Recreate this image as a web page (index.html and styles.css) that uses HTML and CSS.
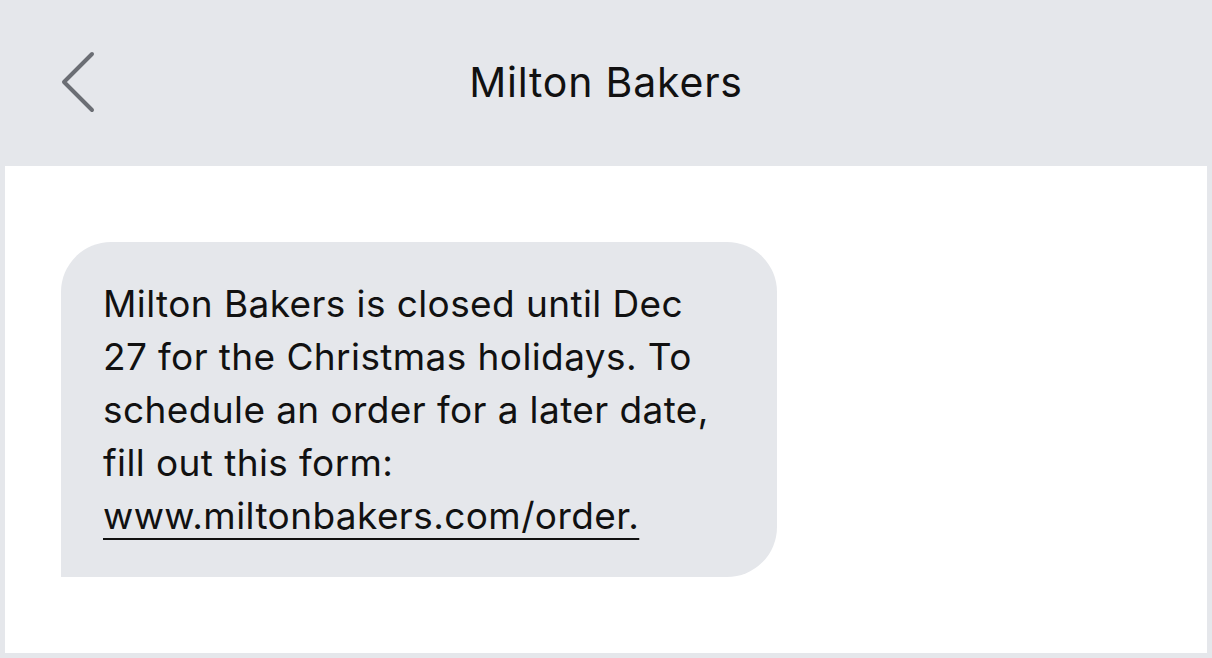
FILE: index.html
```html
<!DOCTYPE html>
<html>
<head>
  <title>Milton Bakers</title>
  <meta charset="utf-8">
  <link rel="stylesheet" href="styles.css">
</head>
<body>
  <div class="header">
    <div class="back">
      <svg width="40" height="64" viewBox="0 0 40 64">
        <polyline points="32,4 4,32 32,60" fill="none" stroke="#6b6e74" stroke-width="4" stroke-linecap="round" stroke-linejoin="round"/>
      </svg>
    </div>
    <div class="title">Milton Bakers</div>
    <div></div>
  </div>
  <div class="thread">
    <div class="bubble">
      Milton Bakers is closed until Dec<br>
      27 for the Christmas holidays. To<br>
      schedule an order for a later date,<br>
      fill out this form:<br>
      <a href="#" class="link">www.miltonbakers.com/order.</a>
    </div>
  </div>
</body>
</html>
```

FILE: styles.css
```css
body {
  margin: 0;
  background-color: #e5e7eb;
  font-family: Inter, Roboto, "Liberation Sans", sans-serif;
  color: #111;
}

.header {
  height: 166px;
  display: grid;
  grid-template-columns: 1fr auto 1fr;
  align-items: center;
}

.back {
  padding-left: 60px;
  padding-bottom: 2px;
  display: flex;
}

.title {
  font-size: 41px;
  padding-bottom: 2px;
  letter-spacing: 0.8px;
}

.thread {
  margin: 0 5px 5px;
  height: 487px;
  box-sizing: border-box;
  background-color: #fff;
  padding: 76px 0 0 56px;
}

.bubble {
  width: 716px;
  height: 335px;
  box-sizing: border-box;
  padding: 35px 0 0 42px;
  background-color: #e5e7eb;
  border-radius: 50px 50px 50px 0;
  font-size: 37px;
  line-height: 53px;
  letter-spacing: 0.4px;
}

.link {
  color: #111;
  text-decoration: underline;
  text-decoration-thickness: 2px;
  text-underline-offset: 9px;
}
```
